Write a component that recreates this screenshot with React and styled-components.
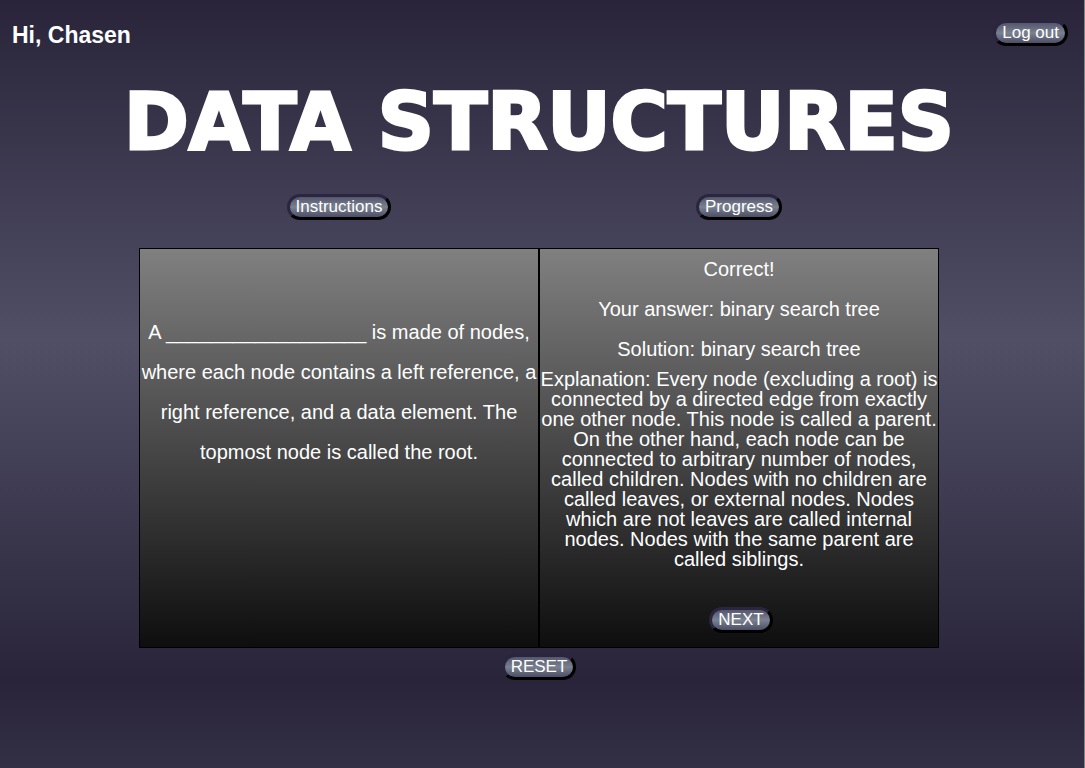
import React from "react";
import styled, { createGlobalStyle } from "styled-components";

const GlobalStyle = createGlobalStyle`
  * { box-sizing: border-box; }
  body {
    margin: 0;
    font-family: "Liberation Sans", Arial, sans-serif;
    font-size: 20px;
    color: #fff;
  }
  h1, h2, p { margin: 0; font-weight: inherit; }
`;

const Page = styled.div`
  min-height: 100vh;
  padding: 20px 6px 0 0;
  border-right: 1px solid #7b8580;
  background: linear-gradient(#29243a, #504f66, #29243a) 0 0 / 100% 680px;
`;

const TopBar = styled.header`
  display: flex;
  justify-content: space-between;
  align-items: flex-start;
  padding: 0 10px 0 12px;
`;

const Greeting = styled.h2`
  font-size: 23px;
  line-height: 30px;
  && { font-weight: 700; }
`;

const Title = styled.h1`
  margin-top: 24px;
  font-family: "DejaVu Sans", sans-serif;
  font-size: 78px;
  line-height: 96px;
  text-align: center;
  white-space: nowrap;
  -webkit-text-stroke: 3px #fff;
  && { font-weight: 700; }
`;

const PillButton = styled.button`
  padding: 0 6px;
  border: 3px solid;
  border-color: #2b2640 #000 #000 #2b2640;
  border-radius: 13px;
  background: linear-gradient(#55566e, #7a818f, #4d4e66);
  color: #fff;
  font-family: inherit;
  font-size: 17px;
  line-height: 20px;
`;

const Columns = styled.div`
  display: grid;
  grid-template-columns: repeat(2, 1fr);
  max-width: 800px;
  margin: 0 auto;
`;

const Menu = styled(Columns)`
  justify-items: center;
  padding: 24px 0 28px;
`;

const Card = styled.section`
  display: flex;
  flex-direction: column;
  align-items: center;
  min-height: 400px;
  border: 1px solid #000;
  background: linear-gradient(#808080, #0e0e0e);
  text-align: center;
`;

const Question = styled.p`
  padding-top: 63px;
  line-height: 40px;
`;

const ResultLine = styled.p`
  line-height: 40px;
`;

const Explanation = styled.p`
  line-height: 20px;
  margin-bottom: 38px;
`;

const NextButton = styled(PillButton)`
  margin-left: 4px;
`;

const Footer = styled.footer`
  display: flex;
  justify-content: center;
  padding-top: 6px;
`;

export default function App() {
  return (
    <Page>
      <GlobalStyle />
      <TopBar>
        <Greeting>Hi, Chasen</Greeting>
        <PillButton>Log out</PillButton>
      </TopBar>
      <main>
        <Title>DATA STRUCTURES</Title>
        <Menu>
          <PillButton>Instructions</PillButton>
          <PillButton>Progress</PillButton>
        </Menu>
        <Columns>
          <Card>
            <Question>
              A __________________ is made of nodes, where each node contains a
              left reference, a right reference, and a data element. The topmost
              node is called the root.
            </Question>
          </Card>
          <Card>
            <ResultLine>Correct!</ResultLine>
            <ResultLine>Your answer: binary search tree</ResultLine>
            <ResultLine>Solution: binary search tree</ResultLine>
            <Explanation>
              Explanation: Every node (excluding a root) is connected by a
              directed edge from exactly one other node. This node is called a
              parent. On the other hand, each node can be connected to arbitrary
              number of nodes, called children. Nodes with no children are
              called leaves, or external nodes. Nodes which are not leaves are
              called internal nodes. Nodes with the same parent are called
              siblings.
            </Explanation>
            <NextButton>NEXT</NextButton>
          </Card>
        </Columns>
      </main>
      <Footer>
        <PillButton>RESET</PillButton>
      </Footer>
    </Page>
  );
}
